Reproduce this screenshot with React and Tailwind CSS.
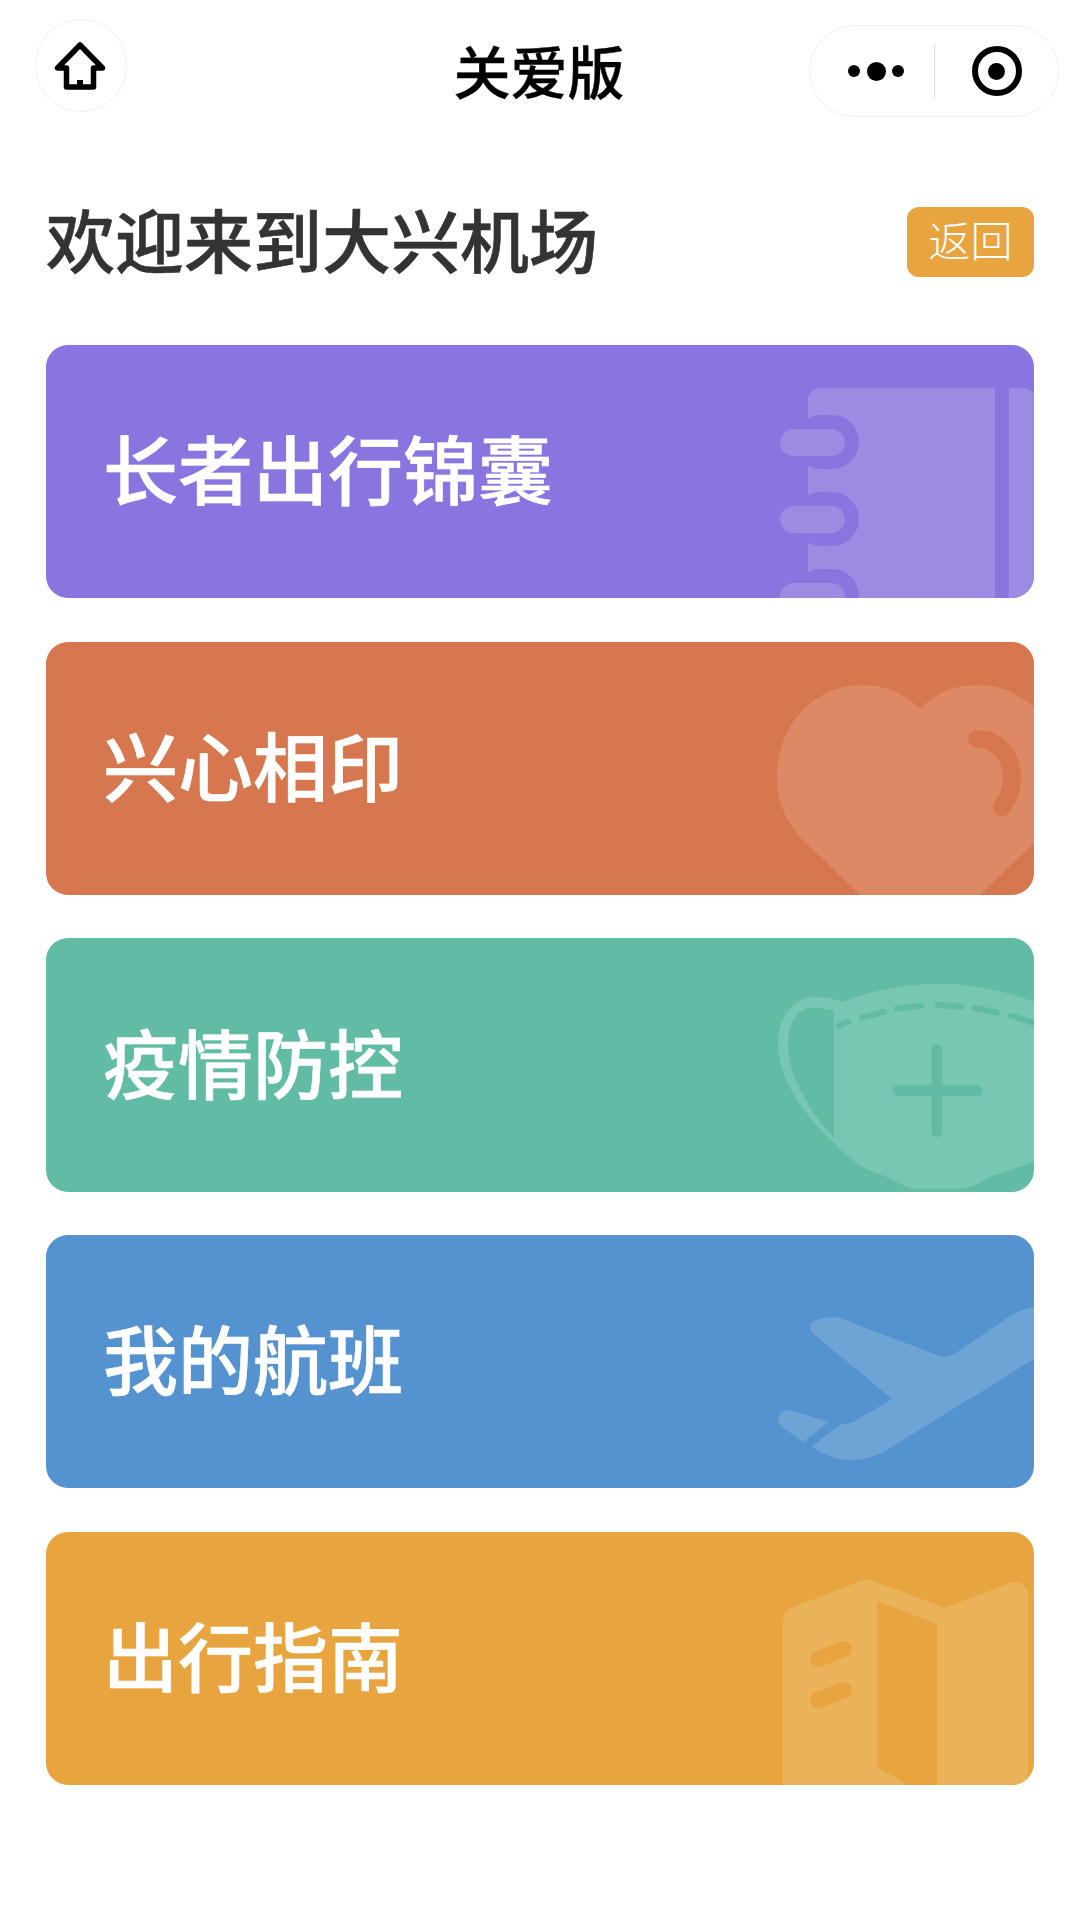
const cards = [
  { label: '长者出行锦囊', bg: 'bg-[#8a75e0]', icon: BookIcon },
  { label: '兴心相印', bg: 'bg-[#d7774f]', icon: HeartIcon },
  { label: '疫情防控', bg: 'bg-[#62bba5]', icon: MaskIcon },
  { label: '我的航班', bg: 'bg-[#5592d0]', icon: PlaneIcon },
  { label: '出行指南', bg: 'bg-[#e8a43f]', icon: MapIcon },
];

function BookIcon() {
  const bg = '#8a75e0';
  const fg = '#9c8ae3';
  return (
    <svg viewBox="0 0 340 253" className="absolute top-0 right-0 h-[253px] w-[340px]">
      <path d="M114 253V55a12 12 0 0 1 12-12h203q7 0 11 6v204z" fill={fg} />
      <rect x="301" y="43" width="14" height="210" fill={bg} />
      {[70, 147, 224].map((y) => (
        <g key={y}>
          <rect x="100" y={y} width="65" height="54" rx="27" fill={bg} />
          <rect x="86" y={y + 14} width="65" height="27" rx="13.5" fill={fg} />
        </g>
      ))}
      <rect x="86" y="70" width="28" height="14" fill={bg} />
      <rect x="86" y="111" width="28" height="13" fill={bg} />
      <rect x="86" y="147" width="28" height="14" fill={bg} />
      <rect x="86" y="188" width="28" height="13" fill={bg} />
      <rect x="86" y="224" width="28" height="14" fill={bg} />
    </svg>
  );
}

function HeartIcon() {
  return (
    <svg viewBox="0 0 340 253" className="absolute top-0 right-0 h-[253px] w-[340px]">
      <path
        d="M226 66C208 50 190 43 168 43C120 43 83 82 83 136C83 160 93 182 109 198L166 253H286L340 201V65C322 50 305 43 283 43C262 43 244 50 226 66Z"
        fill="#dd8966"
      />
      <path d="M283 97C304 97 318 114 318 136C318 147 314 157 308 165" fill="none" stroke="#d7774f" strokeWidth="18" strokeLinecap="round" />
    </svg>
  );
}

function MaskIcon() {
  const bg = '#62bba5';
  const dashes = [
    [145, 87, 154, 83],
    [168, 79, 190, 73],
    [203, 70, 227, 67],
    [244, 66, 267, 68],
    [280, 69, 303, 74],
    [317, 77, 342, 85],
  ];
  return (
    <svg viewBox="0 0 340 253" className="absolute top-0 right-0 h-[253px] w-[340px]">
      <g transform="translate(0 0.7)">
        <path
          d="M148 63C178 52 210 45 243 45C278 45 310 52 340 63V223L306 235C292 238 282 250 266 250H219C205 246 195 238 179 233C160 226 148 212 139 203C110 176 84 140 84 106C84 76 100 58 123 58C132 58 140 60 148 63Z"
          fill="#78c7b2"
        />
        <path d="M140 72C133 70 126 69 119 69C104 69 94 84 94 106C94 138 118 176 140 199Z" fill={bg} />
        {dashes.map(([x1, y1, x2, y2]) => (
          <line key={x1} x1={x1} y1={y1} x2={x2} y2={y2} stroke={bg} strokeWidth="6" strokeLinecap="round" />
        ))}
        <line x1="243" y1="111" x2="243" y2="193" stroke={bg} strokeWidth="11" strokeLinecap="round" />
        <line x1="204" y1="152" x2="283" y2="152" stroke={bg} strokeWidth="11" strokeLinecap="round" />
      </g>
    </svg>
  );
}

function PlaneIcon() {
  return (
    <svg viewBox="0 0 340 253" className="absolute top-0 right-0 h-[253px] w-[340px]">
      <g fill="#6ea3d6">
        <path d="M121 100C114 94 113 88 123 85C130 83 138 81 143 82L246 121C252 122 258 120 263 117L313 83C322 77 331 74 340 72V124L196 213C184 221 170 225 156 225C142 225 128 219 118 211L146 190C150 188 155 189 159 187L198 164Z" />
        <path d="M88 192C82 187 83 179 91 176C95 175 99 176 103 177L135 187L109 207Z" />
      </g>
    </svg>
  );
}

function MapIcon() {
  const bg = '#e8a43f';
  return (
    <svg viewBox="0 0 340 253" className="absolute top-0 right-0 h-[253px] w-[340px]">
      <path
        d="M89 253V90C89 83 93 77 99 75L170 48C172 47 175 47 177 48L251 76L316 51C325 48 334 53 334 62V253Z"
        fill="#ebb359"
      />
      <path d="M183 69L243 92V253H214L183 235Z" fill={bg} />
      <line x1="124" y1="127" x2="150" y2="117" stroke={bg} strokeWidth="16" strokeLinecap="round" />
      <line x1="124" y1="168" x2="150" y2="158" stroke={bg} strokeWidth="16" strokeLinecap="round" />
    </svg>
  );
}

export default function App() {
  return (
    <div className="min-h-[1920px] w-[1080px] bg-white font-['Noto_Sans_CJK_SC','Noto_Sans',sans-serif]">
      {/* top bar */}
      <div className="relative h-[130px]">
        <div className="absolute top-[19px] left-[35px] flex h-[93px] w-[92px] items-center justify-center rounded-full border border-[#f0f0f0] bg-white">
          <svg viewBox="0 0 56 52" className="h-[52px] w-[56px]" fill="none" stroke="#000" strokeWidth="5.5" strokeLinejoin="round">
            <path d="M27 5L4.5 28H13.5V47H40.5V28H49.5Z" />
            <rect x="24" y="40" width="6" height="7" fill="#000" stroke="none" />
          </svg>
        </div>
        <div className="pt-[35px] pr-[2px] text-center text-[57px] leading-[68px] font-medium text-black [-webkit-text-stroke:0.4px_#000]">关爱版</div>
        <div className="absolute top-[25px] left-[809px] flex h-[92px] w-[250px] items-center rounded-full border border-[#f0f0f0] bg-white">
          <div className="flex w-[124px] items-center justify-center gap-[6.5px] pl-[8px]">
            <span className="h-[12px] w-[12px] rounded-full bg-black" />
            <span className="h-[19px] w-[19px] rounded-full bg-black" />
            <span className="h-[12px] w-[12px] rounded-full bg-black" />
          </div>
          <div className="h-[54px] w-px bg-[#dcdcdc]" />
          <div className="flex flex-1 items-center justify-center">
            <div className="flex h-[50px] w-[50px] items-center justify-center rounded-full border-[6px] border-black">
              <span className="h-[17px] w-[17px] rounded-full bg-black" />
            </div>
          </div>
        </div>
      </div>

      <div className="px-[46px]">
        {/* heading */}
        <div className="flex h-[215px] items-start justify-between pt-[77px]">
          <h1 className="-mt-[12px] text-[69px] leading-[86px] font-medium text-[#333333] [-webkit-text-stroke:0.6px_#333333]">欢迎来到大兴机场</h1>
          <button className="h-[70px] w-[127px] rounded-[12px] bg-[#e8a43f] pb-[6px] text-[42px] leading-[64px] font-light text-white">返回</button>
        </div>

        {/* menu cards */}
        <div className="flex flex-col gap-[43.33px]">
          {cards.map((card) => (
            <div key={card.label} className={`relative h-[253.33px] overflow-hidden rounded-[22px] ${card.bg}`}>
              <card.icon />
              <div className="relative flex h-full items-center pb-[8px] pl-[57px] text-[75px] font-medium text-white [-webkit-text-stroke:0.6px_#ffffff]">{card.label}</div>
            </div>
          ))}
        </div>
      </div>
    </div>
  );
}
